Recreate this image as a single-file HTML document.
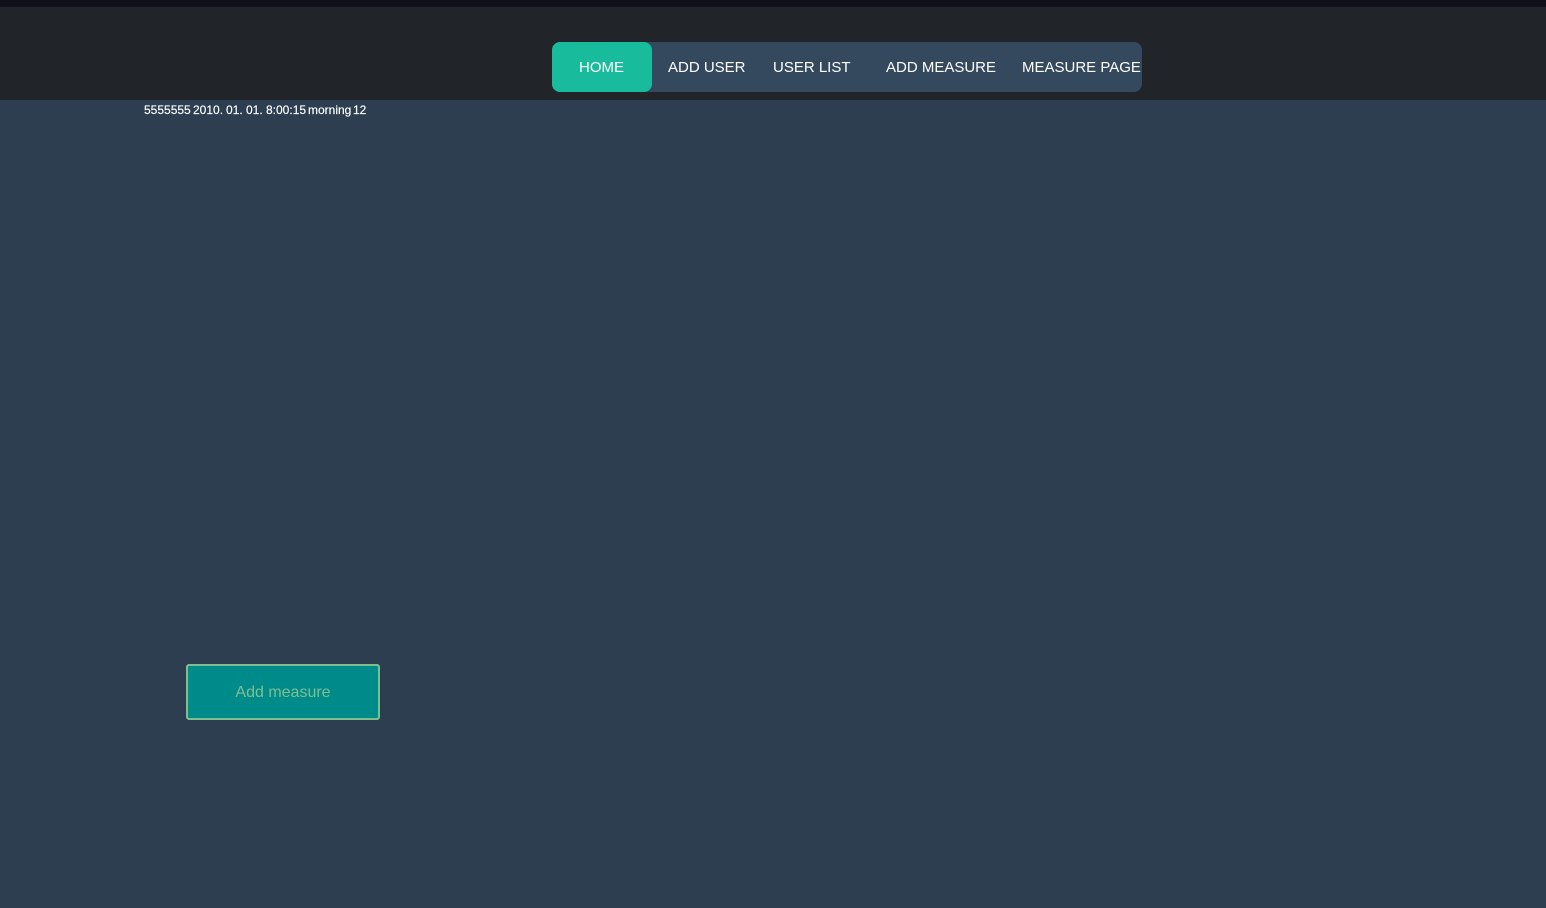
<!DOCTYPE html>
<html>
<head>
<meta charset="utf-8">
<style>
html,body{margin:0;padding:0;width:1546px;height:908px;overflow:hidden;background:#2c3e50;font-family:"Liberation Sans",Arial,sans-serif;}
.top{position:absolute;left:0;top:0;width:1546px;height:7px;background:#10101a;}
.head{position:absolute;left:0;top:7px;width:1546px;height:93px;background:#212529;}
.nav{position:absolute;left:552px;top:42px;width:590px;height:50px;background:#34495e;border-radius:8px;}
.home{position:absolute;left:552px;top:42px;width:100px;height:50px;background:#18bc9c;border-radius:8px;}
.t{position:absolute;top:59px;font-size:15px;line-height:18px;color:#fff;white-space:nowrap;}
.w{position:absolute;top:103px;font-size:12px;line-height:14px;color:#fff;white-space:nowrap;-webkit-text-stroke:0.15px #fff;}
.btn{position:absolute;left:186px;top:664px;width:194px;height:56px;box-sizing:border-box;background:#008b8b;border:2px solid #7fbf8f;border-radius:3px;color:#7fbf8f;font-size:16px;line-height:54px;text-align:center;}
</style>
</head>
<body>
<div class="top"></div>
<div class="head"></div>
<div class="nav"></div>
<div class="home"></div>
<div class="t" style="left:579px">HOME</div>
<div class="t" style="left:668px">ADD USER</div>
<div class="t" style="left:773px">USER LIST</div>
<div class="t" style="left:886px">ADD MEASURE</div>
<div class="t" style="left:1022px">MEASURE PAGE</div>
<span class="w" style="left:144px">5555555</span>
<span class="w" style="left:193px">2010.</span>
<span class="w" style="left:226px">01.</span>
<span class="w" style="left:246px">01.</span>
<span class="w" style="left:266px">8:00:15</span>
<span class="w" style="left:308px">morning</span>
<span class="w" style="left:353px">12</span>
<div class="btn">Add measure</div>
</body>
</html>
